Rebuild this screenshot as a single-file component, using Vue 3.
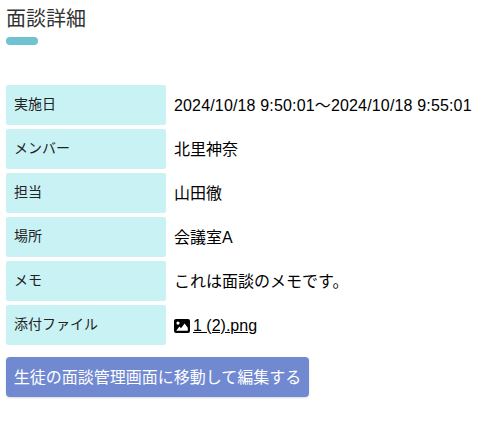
<script setup>
const rows = [
  { label: '実施日', value: '2024/10/18 9:50:01～2024/10/18 9:55:01', latin: true },
  { label: 'メンバー', value: '北里神奈' },
  { label: '担当', value: '山田徹' },
  { label: '場所', value: '会議室A' },
  { label: 'メモ', value: 'これは面談のメモです。' },
]
</script>

<template>
  <div class="page">
    <h2 class="title">面談詳細</h2>
    <div class="accent"></div>
    <div class="rows">
      <div v-for="r in rows" :key="r.label" class="row">
        <div class="label">{{ r.label }}</div>
        <div class="value" :class="{ latin: r.latin }">{{ r.value }}</div>
      </div>
      <div class="row">
        <div class="label">添付ファイル</div>
        <div class="value file">
          <svg class="icon" viewBox="0 0 16 14" width="16" height="14">
            <path fill-rule="evenodd" d="M2 0h12a2 2 0 0 1 2 2v10a2 2 0 0 1-2 2H2a2 2 0 0 1-2-2V2a2 2 0 0 1 2-2zM4 2.5a1.6 1.6 0 1 0 0 3.2 1.6 1.6 0 0 0 0-3.2zM2.2 11.8h11.6v-3L10.6 4.6 7 9.2 5.4 7.6z" fill="#000"/>
          </svg>
          <a class="link">1 (2).png</a>
        </div>
      </div>
    </div>
    <button class="btn">生徒の面談管理画面に移動して編集する</button>
  </div>
</template>

<style scoped>
.page {
  box-sizing: border-box;
  width: 500px;
  height: 433px;
  padding: 6px 6px 0;
  background: #fff;
  font-family: "Liberation Sans", "Noto Sans CJK JP", sans-serif;
  color: #111;
}
.title {
  margin: 0;
  font-size: 20px;
  line-height: 27px;
  font-weight: 400;
  color: #333;
}
.accent {
  width: 32px;
  height: 8px;
  margin-top: 4px;
  border-radius: 4px;
  background: #6fc3d0;
}
.rows {
  margin-top: 40px;
  display: flex;
  flex-direction: column;
  gap: 4px;
}
.row {
  display: flex;
  align-items: center;
  height: 40px;
}
.label {
  box-sizing: border-box;
  width: 160px;
  height: 40px;
  padding: 0 0 2px 8px;
  display: flex;
  align-items: center;
  font-size: 14px;
  line-height: 20px;
  color: #222;
  background: #c9f2f4;
  border-radius: 2px;
}
.value {
  margin-left: 8px;
  padding-top: 1px;
  font-size: 16px;
  line-height: 22px;
  color: #000;
}
.latin {
  letter-spacing: 0.16px;
}
.file {
  display: flex;
  align-items: center;
  gap: 3px;
}
.icon {
  flex: none;
}
.link {
  text-decoration: underline;
}
.btn {
  display: block;
  margin-top: 12px;
  width: 303px;
  height: 40px;
  padding: 2px 0 0;
  border: none;
  border-radius: 4px;
  background: #7189d1;
  color: #fff;
  font-family: inherit;
  font-size: 16px;
  line-height: 22px;
  box-shadow: 0 1px 2px rgba(0,0,0,.15);
}
</style>
